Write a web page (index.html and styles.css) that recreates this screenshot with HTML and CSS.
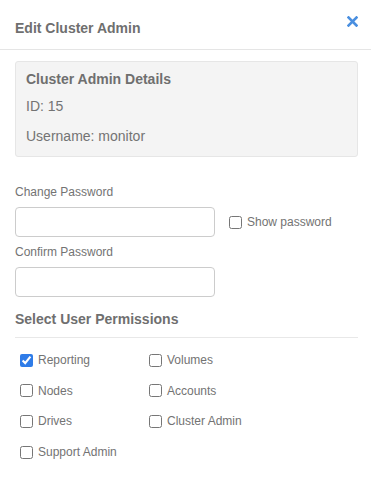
FILE: index.html
```html
<!DOCTYPE html>
<html lang="en">
<head>
  <meta charset="UTF-8" />
  <meta name="viewport" content="width=device-width, initial-scale=1.0"/>
  <title>Edit Cluster Admin</title>
  <link rel="stylesheet" href="styles.css">
</head>
<body>
  <div class="modal">
    <div class="modal-header">
      <h4>Edit Cluster Admin</h4>
      <button class="close-btn" aria-label="Close">
        <svg width="11" height="11" viewBox="0 0 11 11">
          <path d="M1.5 1.5 L9.5 9.5 M9.5 1.5 L1.5 9.5" stroke="#4a8fe0" stroke-width="2.6" stroke-linecap="square"/>
        </svg>
      </button>
    </div>

    <div class="modal-body">
      <div class="details">
        <div class="details-title">Cluster Admin Details</div>
        <div class="details-row">ID: 15</div>
        <div class="details-row">Username: monitor</div>
      </div>

      <div class="field">
        <label for="pw">Change Password</label>
        <div class="pw-row">
          <input type="password" id="pw" />
          <label class="check"><input type="checkbox" /> Show password</label>
        </div>
      </div>

      <div class="field">
        <label for="pw2">Confirm Password</label>
        <input type="password" id="pw2" />
      </div>

      <div class="perm-title">Select User Permissions</div>
      <div class="perms">
        <label class="check"><input type="checkbox" checked /> Reporting</label>
        <label class="check"><input type="checkbox" /> Volumes</label>
        <label class="check"><input type="checkbox" /> Nodes</label>
        <label class="check"><input type="checkbox" /> Accounts</label>
        <label class="check"><input type="checkbox" /> Drives</label>
        <label class="check"><input type="checkbox" /> Cluster Admin</label>
        <label class="check"><input type="checkbox" /> Support Admin</label>
      </div>
    </div>
  </div>
</body>
</html>
```

FILE: styles.css
```css
body {
  margin: 0;
  font-family: "Liberation Sans", Arial, sans-serif;
  color: #737373;
  background: #fff;
}

.modal {
  width: 371px;
}

.modal-header {
  display: flex;
  justify-content: space-between;
  align-items: flex-start;
  padding: 0 13px 0 15px;
  height: 49px;
  border-bottom: 1px solid #e5e5e5;
}
.modal-header h4 {
  margin: 0;
  padding-top: 20px;
  font-size: 14px;
  font-weight: bold;
  color: #6f6f6f;
}
.close-btn {
  background: none;
  border: none;
  padding: 0;
  margin-top: 16px;
  width: 11px;
  height: 11px;
  cursor: pointer;
}
.close-btn svg {
  display: block;
}

.modal-body {
  padding: 11px 13px 0 15px;
}

.details {
  background: #f4f4f4;
  border: 1px solid #e6e6e6;
  border-radius: 3px;
  padding: 9px 10px 11px;
  margin-bottom: 28px;
}
.details-title {
  font-size: 14px;
  font-weight: bold;
  color: #6f6f6f;
  line-height: 17px;
}
.details-row {
  font-size: 14px;
  line-height: 17px;
  margin-top: 10px;
}
.details-row + .details-row {
  margin-top: 13px;
}

.field {
  margin-bottom: 8px;
}
.field > label {
  display: block;
  font-size: 12px;
  line-height: 14px;
  margin-bottom: 8px;
}
.field input[type=password] {
  display: block;
  box-sizing: border-box;
  width: 200px;
  height: 30px;
  border: 1px solid #cccccc;
  border-radius: 4px;
  margin: 0;
}
.pw-row {
  display: flex;
  align-items: center;
  gap: 14px;
}

.check {
  display: flex;
  align-items: center;
  font-size: 12px;
  color: #737373;
}
.check input {
  margin: 0 5px 0 0;
  width: 13px;
  height: 13px;
  accent-color: #2f7ce8;
}

.perm-title {
  margin-top: 14px;
  font-size: 14px;
  font-weight: bold;
  color: #6f6f6f;
  line-height: 17px;
  padding-bottom: 9px;
  border-bottom: 1px solid #e8e8e8;
}
.perms {
  display: grid;
  grid-template-columns: 129px 1fr;
  grid-auto-rows: 14px;
  row-gap: 16.7px;
  padding: 15px 0 0 5px;
}
.perms .check {
  line-height: 14px;
}
```
